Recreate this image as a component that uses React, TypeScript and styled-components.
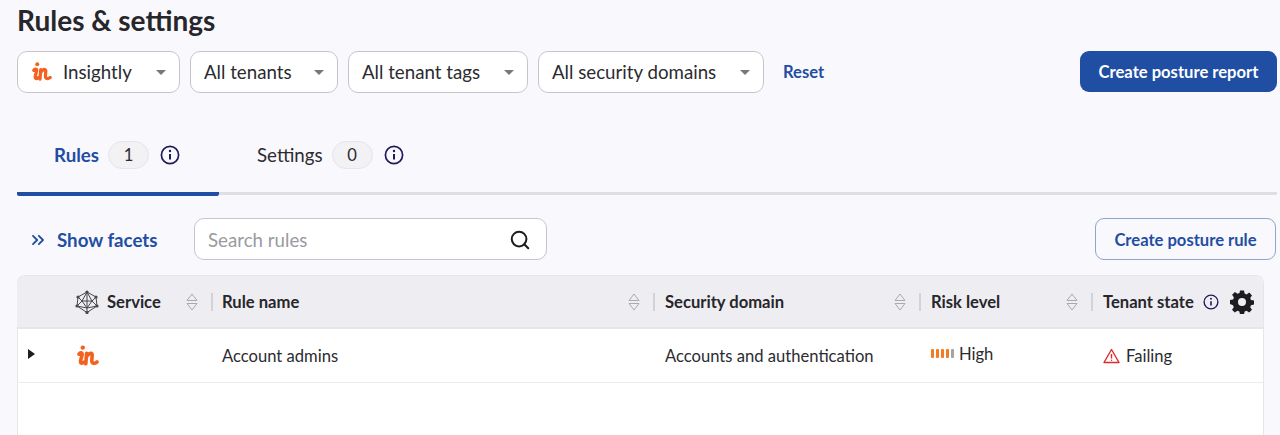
import React from "react";
import styled, { createGlobalStyle } from "styled-components";
import { Search, ChevronsRight } from "lucide-react";

const GlobalStyle = createGlobalStyle`
  html, body {
    margin: 0;
    padding: 0;
    height: 435px;
    overflow: hidden;
    background: #f9f8fc;
    font-family: "Lato", "Liberation Sans", sans-serif;
    color: #26262b;
  }
`;

const BLUE = "#1f4ea3";
const COLUMNS = "58px 147px 443px 266px 172px 1fr";

const Page = styled.div`
  height: 435px;
  overflow: hidden;
  padding: 3px 3px 0 17px;
  box-sizing: border-box;
`;

const Title = styled.h1`
  margin: 0;
  font-size: 28px;
  line-height: 34px;
  font-weight: 700;
  color: #26262b;
`;

const FilterBar = styled.div`
  display: flex;
  align-items: center;
  margin-top: 14px;
  height: 42px;
`;

const Select = styled.div<{ $width: number }>`
  display: flex;
  align-items: center;
  box-sizing: border-box;
  width: ${(p) => p.$width}px;
  height: 42px;
  margin-right: 10px;
  padding: 0 13px;
  background: #fff;
  border: 1px solid #c6c5cb;
  border-radius: 10px;
  font-size: 18.7px;
  color: #2b2b30;
`;

const SelectLabel = styled.span`
  flex: 1;
  white-space: nowrap;
`;

const Caret = styled.span`
  width: 0;
  height: 0;
  border-left: 5px solid transparent;
  border-right: 5px solid transparent;
  border-top: 5px solid #77777c;
`;

const LogoSlot = styled.span`
  display: flex;
  margin: 0 11px 0 1px;
`;

const ResetLink = styled.a`
  margin-left: 9px;
  font-size: 16.6px;
  font-weight: 700;
  color: ${BLUE};
`;

const PrimaryButton = styled.button`
  margin-left: auto;
  width: 197px;
  height: 41px;
  margin-top: -1px;
  border: none;
  border-radius: 9px;
  background: ${BLUE};
  color: #fff;
  font-family: inherit;
  font-size: 16.6px;
  font-weight: 700;
`;

const Tabs = styled.div`
  display: flex;
  height: 99px;
  border-bottom: 3px solid #dfdee3;
`;

const Tab = styled.div<{ $active?: boolean; $width: number; $inset: number }>`
  display: flex;
  align-items: center;
  box-sizing: border-box;
  width: ${(p) => p.$width}px;
  height: 103px;
  padding-left: ${(p) => p.$inset}px;
  border-bottom: 4px solid ${(p) => (p.$active ? BLUE : "transparent")};
  border-radius: 0 0 2px 2px;
`;

const TabInner = styled.div`
  display: flex;
  align-items: center;
  margin-top: 24px;
`;

const TabLabel = styled.span<{ $active?: boolean }>`
  font-size: 18.7px;
  font-weight: ${(p) => (p.$active ? 700 : 400)};
  color: ${(p) => (p.$active ? BLUE : "#2b2b30")};
`;

const Count = styled.span`
  display: flex;
  align-items: center;
  justify-content: center;
  width: 41px;
  height: 28px;
  margin: 0 11px 0 9px;
  border: 1px solid #e6e5ea;
  border-radius: 14px;
  background: #f2f1f4;
  box-sizing: border-box;
  font-size: 16.6px;
  color: #2b2b30;
`;

const Toolbar = styled.div`
  display: flex;
  align-items: center;
  height: 42px;
  margin-top: 23px;
`;

const FacetsLink = styled.a`
  display: flex;
  align-items: center;
  width: 177px;
  padding-left: 11px;
  margin-top: 2px;
  box-sizing: border-box;
  font-size: 18.7px;
  font-weight: 700;
  color: ${BLUE};
  white-space: nowrap;
  gap: 9px;
`;

const SearchBox = styled.div`
  display: flex;
  align-items: center;
  justify-content: space-between;
  box-sizing: border-box;
  width: 353px;
  height: 42px;
  padding: 1px 15px 0 13px;
  background: #fff;
  border: 1px solid #c6c5cb;
  border-radius: 10px;
  font-size: 18.7px;
  color: #9a9a9f;
`;

const OutlineButton = styled.button`
  margin-left: auto;
  margin-right: 1px;
  width: 181px;
  height: 42px;
  padding: 2px 0 0;
  background: transparent;
  border: 1px solid #8ea5cd;
  border-radius: 9px;
  font-family: inherit;
  font-size: 16.6px;
  font-weight: 700;
  color: ${BLUE};
`;

const Table = styled.div`
  width: 1247px;
  height: 200px;
  margin-top: 15px;
  background: #fff;
  border: 1px solid #e6e5ea;
  border-bottom: none;
  border-radius: 8px 8px 0 0;
  box-sizing: border-box;
`;

const HeaderRow = styled.div`
  display: grid;
  grid-template-columns: ${COLUMNS};
  align-items: center;
  height: 53px;
  margin-left: -1px;
  background: #eeedf1;
  border-bottom: 2px solid #e6e5ea;
  border-radius: 8px 8px 0 0;
  box-sizing: border-box;
`;

const HeaderCell = styled.div`
  display: flex;
  align-items: center;
  position: relative;
  font-size: 16.6px;
  font-weight: 700;
  color: #26262b;
  white-space: nowrap;
`;

const ServiceLabel = styled.span`
  margin-left: 8px;
`;

const SortGroup = styled.span<{ $right: number }>`
  position: absolute;
  right: ${(p) => p.$right}px;
  top: 50%;
  transform: translateY(-50%);
  display: flex;
  align-items: center;
  gap: 13px;
`;

const Divider = styled.span`
  width: 2px;
  height: 18px;
  background: #d3d2d7;
`;

const HeaderIcon = styled.span<{ $gap: number }>`
  display: flex;
  margin-left: ${(p) => p.$gap}px;
`;

const Row = styled.div`
  display: grid;
  grid-template-columns: ${COLUMNS};
  align-items: center;
  height: 54px;
  margin-left: -1px;
  border-bottom: 1px solid #ececef;
  box-sizing: border-box;
  font-size: 16.6px;
  color: #2b2b30;
`;

const Cell = styled.div`
  display: flex;
  align-items: center;
  white-space: nowrap;
`;

const ExpandCell = styled(Cell)`
  padding-left: 11px;
`;

const LogoCell = styled(Cell)`
  padding-left: 2px;
`;

const Expander = styled.span`
  width: 0;
  height: 0;
  margin-bottom: 3px;
  border-top: 5px solid transparent;
  border-bottom: 5px solid transparent;
  border-left: 7px solid #1d1d20;
`;

const RiskBars = styled.span`
  display: flex;
  gap: 1.5px;
  margin-right: 5px;
`;

const RiskBar = styled.span<{ $on: boolean }>`
  width: 3.4px;
  height: 9px;
  border-radius: 1px;
  background: ${(p) => (p.$on ? "#f47b20" : "#a3a3a8")};
`;

const RiskCell = styled(Cell)`
  margin-top: -4px;
`;

const StateCell = styled(Cell)`
  gap: 6px;
`;

const InsightlyLogo = ({ size = 20 }: { size?: number }) => (
  <svg width={size} height={size} viewBox="0 0 22 22" fill="none" stroke="#f4611f" strokeWidth="3.6" strokeLinecap="round" strokeLinejoin="round">
    <circle cx="5.8" cy="2.6" r="2.2" fill="#f4611f" stroke="none" />
    <path d="M2 9.200 C3 7.600 5.200 7.200 5.200 9.400 L3.600 15.600 C3.200 18.600 5 18.800 7 17.200" />
    <path d="M9.600 8.400 L8.800 18.800 M9.200 12.400 C10.400 9 14.800 6.600 15.200 9.600 L14.800 15.400 C14.800 18.800 17.600 18.800 20 17" />
  </svg>
);

const InfoIcon = ({ size = 20 }: { size?: number }) => (
  <svg width={size} height={size} viewBox="0 0 20 20" fill="none" stroke="#1e1a5c" strokeWidth="1.7">
    <circle cx="10" cy="10" r="8.6" />
    <path d="M10 9v5.400" strokeWidth="2" />
    <circle cx="10" cy="6" r="1.2" fill="#1e1a5c" stroke="none" />
  </svg>
);

const SortIcon = () => (
  <svg width="12" height="20" viewBox="0 0 12 20" fill="none" stroke="#a9a9ae" strokeWidth="1">
    <path d="M1 8.500 L6 2 L11 8.500 Z" />
    <path d="M1 11.500 L6 18 L11 11.500 Z" />
  </svg>
);

const ServiceIcon = () => (
  <svg width="24" height="24" viewBox="0 0 24 24" fill="none" stroke="#47474c" strokeWidth="1">
    <path d="M12 2 L21 7 L22 16 L12 22.500 L2 16 L3 7 Z" />
    <path d="M12 2 L7 11 L12 18 L17 11 Z M3 7 L7 11 L17 11 L21 7 M2 16 L7 11 M22 16 L17 11 M2 16 L12 18 L22 16 M12 18 V22.500 M12 2 V18" />
    <g fill="#47474c" stroke="none">
      <circle cx="12" cy="2" r="1.6" />
      <circle cx="21" cy="7" r="1.6" />
      <circle cx="22" cy="16" r="1.6" />
      <circle cx="12" cy="22.500" r="1.6" />
      <circle cx="2" cy="16" r="1.6" />
      <circle cx="3" cy="7" r="1.6" />
    </g>
  </svg>
);

const GearIcon = () => (
  <svg width="24" height="24" viewBox="0 0 24 24">
    <path
      fill="#1d1d20"
      fillRule="evenodd"
      d="M10 0.500h4l.6 3.100 2 .8 2.600-1.800 2.800 2.800-1.800 2.600.8 2 3.100.6v4l-3.100.6-.8 2 1.800 2.600-2.800 2.800-2.600-1.800-2 .8-.6 3.100h-4l-.6-3.100-2-.8-2.600 1.800-2.800-2.800 1.800-2.600-.8-2L0 14v-4l3.100-.6.8-2L2.100 4.800l2.800-2.800 2.600 1.800 2-.8zM12 8a4 4 0 1 0 0 8 4 4 0 0 0 0-8z"
    />
  </svg>
);

const WarningIcon = () => (
  <svg width="17" height="16" viewBox="0 0 17 16" fill="none" stroke="#dc2b2b" strokeWidth="1.4" strokeLinejoin="round">
    <path d="M8.500 1.500 L16 14.500 H1 Z" />
    <path d="M8.500 6 V10.500" />
    <circle cx="8.500" cy="12.300" r="0.7" fill="#dc2b2b" stroke="none" />
  </svg>
);

const filters = [
  { label: "All tenants", width: 148 },
  { label: "All tenant tags", width: 180 },
  { label: "All security domains", width: 226 },
];

const App = () => {
  return (
    <Page>
      <GlobalStyle />
      <Title>Rules &amp; settings</Title>

      <FilterBar>
        <Select $width={163}>
          <LogoSlot>
            <InsightlyLogo />
          </LogoSlot>
          <SelectLabel>Insightly</SelectLabel>
          <Caret />
        </Select>
        {filters.map((f) => (
          <Select key={f.label} $width={f.width}>
            <SelectLabel>{f.label}</SelectLabel>
            <Caret />
          </Select>
        ))}
        <ResetLink>Reset</ResetLink>
        <PrimaryButton>Create posture report</PrimaryButton>
      </FilterBar>

      <Tabs>
        <Tab $active $width={202} $inset={37}>
          <TabInner>
            <TabLabel $active>Rules</TabLabel>
            <Count>1</Count>
            <InfoIcon />
          </TabInner>
        </Tab>
        <Tab $width={222} $inset={38}>
          <TabInner>
            <TabLabel>Settings</TabLabel>
            <Count>0</Count>
            <InfoIcon />
          </TabInner>
        </Tab>
      </Tabs>

      <Toolbar>
        <FacetsLink>
          <ChevronsRight size={20} strokeWidth={2.2} />
          Show facets
        </FacetsLink>
        <SearchBox>
          Search rules
          <Search size={22} strokeWidth={2.2} color="#1d1d20" />
        </SearchBox>
        <OutlineButton>Create posture rule</OutlineButton>
      </Toolbar>

      <Table>
        <HeaderRow>
          <div />
          <HeaderCell>
            <ServiceIcon />
            <ServiceLabel>Service</ServiceLabel>
            <SortGroup $right={9}>
              <SortIcon />
              <Divider />
            </SortGroup>
          </HeaderCell>
          <HeaderCell>
            Rule name
            <SortGroup $right={10}>
              <SortIcon />
              <Divider />
            </SortGroup>
          </HeaderCell>
          <HeaderCell>
            Security domain
            <SortGroup $right={10}>
              <SortIcon />
              <Divider />
            </SortGroup>
          </HeaderCell>
          <HeaderCell>
            Risk level
            <SortGroup $right={10}>
              <SortIcon />
              <Divider />
            </SortGroup>
          </HeaderCell>
          <HeaderCell>
            Tenant state
            <HeaderIcon $gap={9}>
              <InfoIcon size={16} />
            </HeaderIcon>
            <HeaderIcon $gap={11}>
              <GearIcon />
            </HeaderIcon>
          </HeaderCell>
        </HeaderRow>
        <Row>
          <ExpandCell>
            <Expander />
          </ExpandCell>
          <LogoCell>
            <InsightlyLogo size={22} />
          </LogoCell>
          <Cell>Account admins</Cell>
          <Cell>Accounts and authentication</Cell>
          <RiskCell>
            <RiskBars>
              {[0, 1, 2, 3, 4].map((i) => (
                <RiskBar key={i} $on={i < 4} />
              ))}
            </RiskBars>
            High
          </RiskCell>
          <StateCell>
            <WarningIcon />
            Failing
          </StateCell>
        </Row>
      </Table>
    </Page>
  );
};

export default App;
